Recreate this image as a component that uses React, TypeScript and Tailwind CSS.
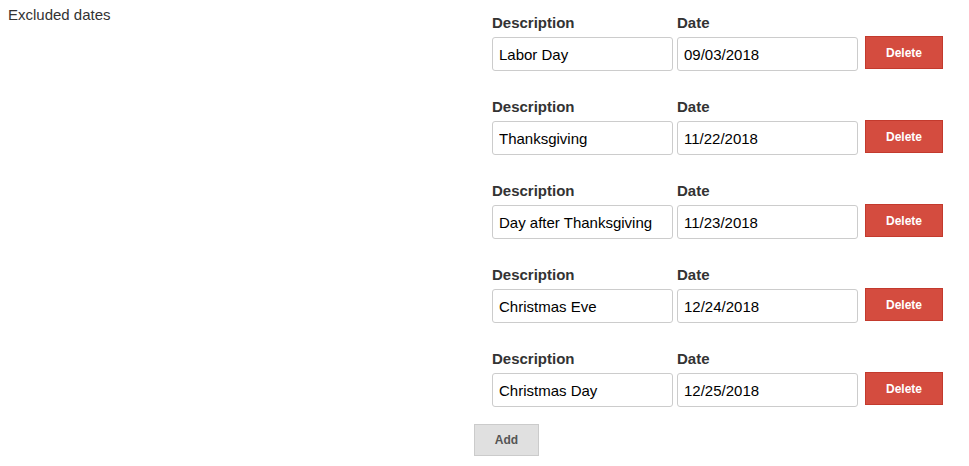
const rows = [
  { description: "Labor Day", date: "09/03/2018" },
  { description: "Thanksgiving", date: "11/22/2018" },
  { description: "Day after Thanksgiving", date: "11/23/2018" },
  { description: "Christmas Eve", date: "12/24/2018" },
  { description: "Christmas Day", date: "12/25/2018" },
];

export default function App() {
  return (
    <div className="min-h-screen w-full bg-white text-[#333] font-['Liberation_Sans',Arial,sans-serif] flex">
      {/* left label */}
      <div className="w-[474px] shrink-0 pl-2 pt-[5px] text-[15px] leading-[20px]">
        Excluded dates
      </div>

      {/* right column */}
      <div className="pt-[12px] flex flex-col">
        <div className="flex flex-col gap-[25px] pl-[18px]">
          {rows.map((r) => (
            <div key={r.date} className="flex items-start">
              <div className="flex flex-col w-[181px]">
                <label className="h-[20px] leading-[22px] text-[15px] font-bold mb-[5px]">Description</label>
                <input
                  defaultValue={r.description}
                  className="h-[34px] w-[181px] border border-[#ccc] rounded-[3px] px-[6px] text-[15px] text-black outline-none"
                />
              </div>
              <div className="flex flex-col w-[181px] ml-[4px]">
                <label className="h-[20px] leading-[22px] text-[15px] font-bold mb-[5px]">Date</label>
                <input
                  defaultValue={r.date}
                  className="h-[34px] w-[181px] border border-[#ccc] rounded-[3px] px-[6px] text-[15px] text-black outline-none"
                />
              </div>
              <button className="ml-[7px] mt-[24px] w-[78px] h-[33px] bg-[#d44c3f] border border-[#c33a2d] text-white text-[12px] font-bold">
                Delete
              </button>
            </div>
          ))}
        </div>
        <button className="mt-[17px] w-[65px] h-[32px] bg-[#e0e0e0] border border-[#cbcbcb] text-[#555] text-[12px] font-bold">
          Add
        </button>
      </div>
    </div>
  );
}
